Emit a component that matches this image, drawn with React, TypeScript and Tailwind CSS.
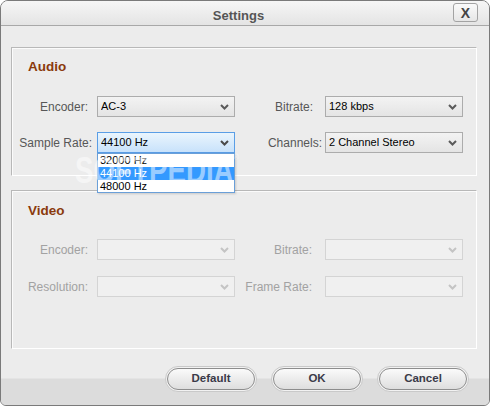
import React from "react";

type Variant = "normal" | "focus" | "disabled";

function Chevron({ color }: { color: string }) {
  return (
    <svg width="9" height="6" viewBox="0 0 9 6" className="shrink-0">
      <path d="M1 1 L4.5 4.5 L8 1" fill="none" stroke={color} strokeWidth="2" />
    </svg>
  );
}

function Select({ value, variant = "normal" }: { value?: string; variant?: Variant }) {
  const box =
    variant === "focus"
      ? "border-[#5a9ee6] bg-[linear-gradient(to_bottom,#eaf5fd,#c8e2fb)]"
      : variant === "disabled"
      ? "border-[#d4d4d4] bg-[#f0f0f0]"
      : "border-[#acacac] bg-[linear-gradient(to_bottom,#f3f3f3,#e4e4e4)]";
  const chev = variant === "disabled" ? "#c4c4c4" : variant === "focus" ? "#4a4a4a" : "#5a5a5a";
  return (
    <div className={`w-[138px] h-[21px] border ${box} flex items-center pl-[3px] pr-[5px]`}>
      <span className="flex-1 text-[11px] text-black leading-none truncate">{value}</span>
      <Chevron color={chev} />
    </div>
  );
}

function SampleRateSelect() {
  const options = ["32000 Hz", "44100 Hz", "48000 Hz"];
  return (
    <div className="relative">
      <Select value="44100 Hz" variant="focus" />
      <div className="absolute left-0 top-[21px] w-[138px] h-[40px] border border-[#6a9fd8] bg-white flex flex-col shadow-[1px_1px_2px_rgba(0,0,0,0.15)] z-10">
        {options.map((o) => (
          <div
            key={o}
            className={`h-[13px] pl-[2px] text-[11px] leading-[13px] ${
              o === "44100 Hz" ? "bg-[#3399ff] text-white" : "text-black"
            }`}
          >
            {o}
          </div>
        ))}
      </div>
    </div>
  );
}

function Row({
  left,
  right,
  disabled,
}: {
  left: { label: string; pr: string; field: React.ReactNode };
  right: { label: string; pr: string; field: React.ReactNode };
  disabled?: boolean;
}) {
  const color = disabled ? "text-[#a2a2a2]" : "text-[#575757]";
  return (
    <div className="flex items-center h-[21px]">
      <div className={`w-[85px] text-right text-[12px] ${color} ${left.pr}`}>{left.label}</div>
      {left.field}
      <div className={`w-[90px] text-right text-[12px] ${color} ${right.pr}`}>{right.label}</div>
      {right.field}
    </div>
  );
}

function Panel({ title, children, className }: { title: string; children: React.ReactNode; className: string }) {
  return (
    <div
      className={`ml-[10px] w-[466px] border border-[#b8b8b8] border-r-white border-b-white shadow-[inset_1px_1px_0_#fbfbfb] ${className}`}
    >
      <div className="pl-[16px] text-[13.5px] leading-[16px] font-bold text-[#8a3a0c]">{title}</div>
      {children}
    </div>
  );
}

function PillButton({ label }: { label: string }) {
  return (
    <div className="w-[92px] h-[26px] rounded-full border border-[#c9c9c9] bg-[#f2f2f2] p-[1px]">
      <div className="w-full h-full rounded-full border border-[#8d8d8d] bg-[linear-gradient(to_bottom,#fbfbfb,#ececec_50%,#dedede)] flex items-center justify-center text-[11.5px] font-bold text-[#3a3a48]">
        {label}
      </div>
    </div>
  );
}

export default function App() {
  return (
    <div className="w-[490px] h-[406px] relative flex flex-col border border-[#7a7a7a] rounded-t-[8px] rounded-b-[6px] bg-[#ececec] overflow-hidden font-['Liberation_Sans',Arial,sans-serif]">
      {/* title bar */}
      <div className="relative h-[25px] shrink-0 border-b border-[#a8a8a8] bg-[linear-gradient(to_bottom,#f6f6f6,#e4e4e4)]">
        <div className="pt-[7px] pr-[13px] text-center text-[13px] leading-[16px] font-bold text-[#555]">Settings</div>
        <div className="absolute right-[11px] top-[2px] w-[25px] h-[19px] border border-[#a3a3a3] rounded-[3px] bg-[linear-gradient(to_bottom,#fafafa,#e6e6e6)] flex items-center justify-center text-[14px] leading-none font-bold text-[#444]">
          X
        </div>
      </div>

      <Panel title="Audio" className="mt-[21px] h-[129px] pt-[11px]">
        <div className="mt-[21px] flex flex-col gap-[15px]">
          <Row
            left={{ label: "Encoder:", pr: "pr-[9px]", field: <Select value="AC-3" /> }}
            right={{ label: "Bitrate:", pr: "pr-[12px]", field: <Select value="128 kbps" /> }}
          />
          <Row
            left={{ label: "Sample Rate:", pr: "pr-[5px]", field: <SampleRateSelect /> }}
            right={{ label: "Channels:", pr: "pr-[3px]", field: <Select value="2 Channel Stereo" /> }}
          />
        </div>
      </Panel>

      <Panel title="Video" className="mt-[14px] h-[159px] pt-[12px]">
        <div className="mt-[20px] flex flex-col gap-[16px]">
          <Row
            disabled
            left={{ label: "Encoder:", pr: "pr-[9px]", field: <Select variant="disabled" /> }}
            right={{ label: "Bitrate:", pr: "pr-[13px]", field: <Select variant="disabled" /> }}
          />
          <Row
            disabled
            left={{ label: "Resolution:", pr: "pr-[9px]", field: <Select variant="disabled" /> }}
            right={{ label: "Frame Rate:", pr: "pr-[13px]", field: <Select variant="disabled" /> }}
          />
        </div>
      </Panel>

      <div className="flex-1 flex justify-end items-start gap-[14px] pt-[17px] pr-[20px] bg-[linear-gradient(to_bottom,#ececec_0,#ececec_29px,#dcdcdc_30px,#dcdcdc_100%)]">
        <PillButton label="Default" />
        <PillButton label="OK" />
        <PillButton label="Cancel" />
      </div>

      {/* watermark */}
      <div className="absolute left-[74px] top-[152px] z-20 pointer-events-none origin-left scale-x-[0.77] text-[36px] font-bold leading-none text-white/50 whitespace-nowrap">
        SOFTPEDIA<span className="text-[9px] align-top">®</span>
      </div>
    </div>
  );
}
